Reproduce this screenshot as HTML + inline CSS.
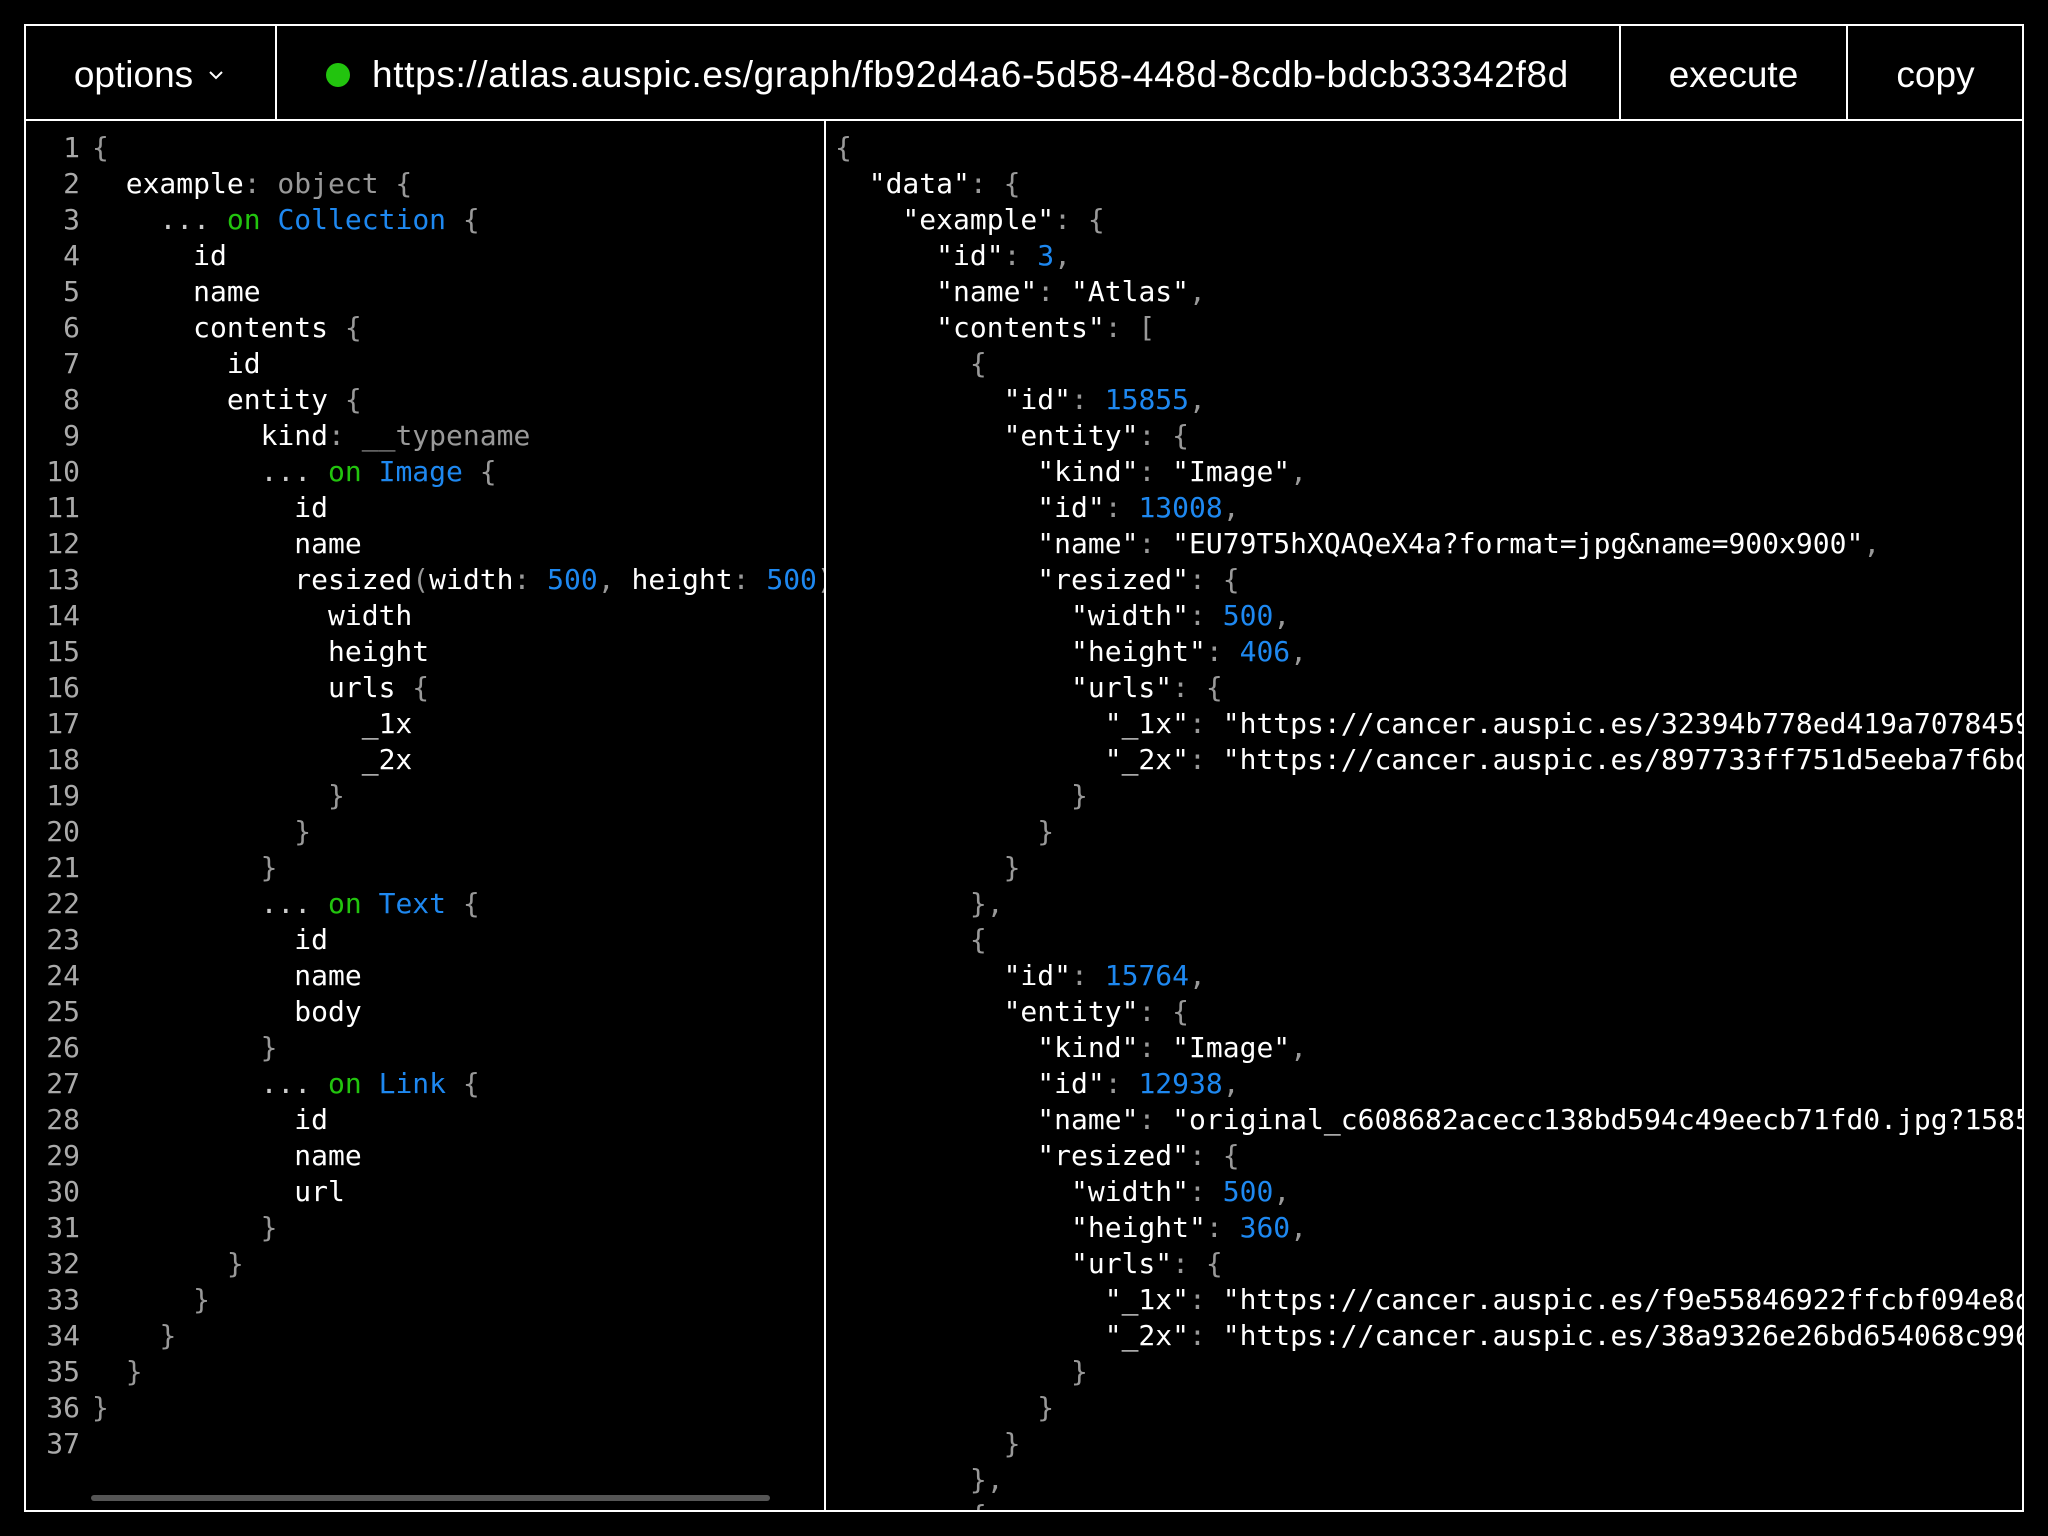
<!DOCTYPE html>
<html><head><meta charset="utf-8"><style>
*{margin:0;padding:0;box-sizing:border-box}
html,body{width:2048px;height:1536px;background:#000;overflow:hidden}
.frame{position:absolute;left:24px;top:24px;width:2000px;height:1488px;border:2px solid #fff}
.hline{position:absolute;background:#fff}
.hdr{position:absolute;top:28px;height:94px;display:flex;align-items:center;justify-content:center;color:#fff;font-family:"Liberation Sans",sans-serif;font-size:37px}
.code{position:absolute;top:130px;font-family:"DejaVu Sans Mono",monospace;font-size:28px;line-height:36px;color:#fff;white-space:pre;overflow:hidden}
.g{color:#999}.gr{color:#22c40e}.b{color:#1e88f0}.n{color:#aaa;display:inline-block;width:54px;text-align:right;margin-right:12px}
</style></head><body>
<div class="frame"></div>
<div class="hline" style="left:24px;top:119px;width:2000px;height:2px"></div>
<div class="hline" style="left:275px;top:24px;width:2px;height:96px"></div>
<div class="hline" style="left:1619px;top:24px;width:2px;height:96px"></div>
<div class="hline" style="left:1846px;top:24px;width:2px;height:96px"></div>
<div class="hline" style="left:824px;top:120px;width:2px;height:1392px"></div>
<div class="hdr" style="left:26px;width:249px">options<svg width="22" height="14" viewBox="0 0 22 14" style="margin-left:12px"><path d="M5 4 L11 10 L17 4" stroke="#fff" stroke-width="2" fill="none"/></svg></div>
<div class="hdr" style="left:277px;width:1342px;justify-content:flex-start;padding-left:49px"><span style="display:inline-block;width:24px;height:24px;border-radius:50%;background:#22c40e;margin-right:22px"></span><span style="letter-spacing:0.65px">https://atlas.auspic.es/graph/fb92d4a6-5d58-448d-8cdb-bdcb33342f8d</span></div>
<div class="hdr" style="left:1621px;width:225px">execute</div>
<div class="hdr" style="left:1848px;width:175px">copy</div>
<div class="code" style="left:26px;width:798px;height:1340px"><span class="n">1</span><span class="g">{</span>
<span class="n">2</span>  example<span class="g">: object {</span>
<span class="n">3</span>    <span style="color:#ccc">...</span> <span class="gr">on</span> <span class="b">Collection</span> <span class="g">{</span>
<span class="n">4</span>      id
<span class="n">5</span>      name
<span class="n">6</span>      contents <span class="g">{</span>
<span class="n">7</span>        id
<span class="n">8</span>        entity <span class="g">{</span>
<span class="n">9</span>          kind<span class="g">: __typename</span>
<span class="n">10</span>          <span style="color:#ccc">...</span> <span class="gr">on</span> <span class="b">Image</span> <span class="g">{</span>
<span class="n">11</span>            id
<span class="n">12</span>            name
<span class="n">13</span>            resized<span class="g">(</span>width<span class="g">:</span> <span class="b">500</span><span class="g">,</span> height<span class="g">:</span> <span class="b">500</span><span class="g">) {</span>
<span class="n">14</span>              width
<span class="n">15</span>              height
<span class="n">16</span>              urls <span class="g">{</span>
<span class="n">17</span>                _1x
<span class="n">18</span>                _2x
<span class="n">19</span>              <span class="g">}</span>
<span class="n">20</span>            <span class="g">}</span>
<span class="n">21</span>          <span class="g">}</span>
<span class="n">22</span>          <span style="color:#ccc">...</span> <span class="gr">on</span> <span class="b">Text</span> <span class="g">{</span>
<span class="n">23</span>            id
<span class="n">24</span>            name
<span class="n">25</span>            body
<span class="n">26</span>          <span class="g">}</span>
<span class="n">27</span>          <span style="color:#ccc">...</span> <span class="gr">on</span> <span class="b">Link</span> <span class="g">{</span>
<span class="n">28</span>            id
<span class="n">29</span>            name
<span class="n">30</span>            url
<span class="n">31</span>          <span class="g">}</span>
<span class="n">32</span>        <span class="g">}</span>
<span class="n">33</span>      <span class="g">}</span>
<span class="n">34</span>    <span class="g">}</span>
<span class="n">35</span>  <span class="g">}</span>
<span class="n">36</span><span class="g">}</span>
<span class="n">37</span></div>
<div class="hline" style="left:91px;top:1495px;width:679px;height:6px;background:#555;border-radius:3px"></div>
<div class="code" style="left:835px;width:1188px;height:1380px"><span class="g">{</span>
  "data"<span class="g">: {</span>
    "example"<span class="g">: {</span>
      "id"<span class="g">:</span> <span class="b">3</span><span class="g">,</span>
      "name"<span class="g">:</span> "Atlas"<span class="g">,</span>
      "contents"<span class="g">: [</span>
        <span class="g">{</span>
          "id"<span class="g">:</span> <span class="b">15855</span><span class="g">,</span>
          "entity"<span class="g">: {</span>
            "kind"<span class="g">:</span> "Image"<span class="g">,</span>
            "id"<span class="g">:</span> <span class="b">13008</span><span class="g">,</span>
            "name"<span class="g">:</span> "EU79T5hXQAQeX4a?format=jpg&amp;name=900x900"<span class="g">,</span>
            "resized"<span class="g">: {</span>
              "width"<span class="g">:</span> <span class="b">500</span><span class="g">,</span>
              "height"<span class="g">:</span> <span class="b">406</span><span class="g">,</span>
              "urls"<span class="g">: {</span>
                "_1x"<span class="g">:</span> "https://cancer.auspic.es/32394b778ed419a70784590"
                "_2x"<span class="g">:</span> "https://cancer.auspic.es/897733ff751d5eeba7f6bd0"
              <span class="g">}</span>
            <span class="g">}</span>
          <span class="g">}</span>
        <span class="g">},</span>
        <span class="g">{</span>
          "id"<span class="g">:</span> <span class="b">15764</span><span class="g">,</span>
          "entity"<span class="g">: {</span>
            "kind"<span class="g">:</span> "Image"<span class="g">,</span>
            "id"<span class="g">:</span> <span class="b">12938</span><span class="g">,</span>
            "name"<span class="g">:</span> "original_c608682acecc138bd594c49eecb71fd0.jpg?15850"
            "resized"<span class="g">: {</span>
              "width"<span class="g">:</span> <span class="b">500</span><span class="g">,</span>
              "height"<span class="g">:</span> <span class="b">360</span><span class="g">,</span>
              "urls"<span class="g">: {</span>
                "_1x"<span class="g">:</span> "https://cancer.auspic.es/f9e55846922ffcbf094e8d0"
                "_2x"<span class="g">:</span> "https://cancer.auspic.es/38a9326e26bd654068c9960"
              <span class="g">}</span>
            <span class="g">}</span>
          <span class="g">}</span>
        <span class="g">},</span>
        <span class="g">{</span></div>
</body></html>
